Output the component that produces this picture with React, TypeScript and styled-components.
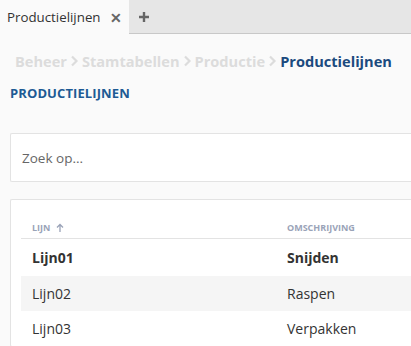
import React, { FC } from 'react'
import styled, { createGlobalStyle } from 'styled-components'

const GlobalStyle = createGlobalStyle`
	html, body {
		margin: 0;
		padding: 0;
		background: #fafafa;
		font-family: 'Open Sans', 'Liberation Sans', sans-serif;
		overflow: hidden;
	}
`

const TabBar = styled.div`
	display: flex;
	height: 34px;
	background: #e6e6e6;
	border-bottom: solid 1px #c8c8c8;
	box-sizing: border-box;
`

const Tab = styled.div`
	display: flex;
	align-items: center;
	gap: 9px;
	width: 129px;
	padding-left: 7px;
	box-sizing: border-box;
	background: #fafafa;
	height: 34px;
	font-size: 13.3px;
	color: #333;

	i {
		font-style: normal;
		font-weight: 700;
		font-size: 14px;
		color: #666;
	}
`

const AddTab = styled.div`
	display: flex;
	align-items: center;
	justify-content: center;
	width: 30px;
	color: #666;
`

const Page = styled.div`
	padding: 17px 0 0 10px;
`

const Breadcrumb = styled.ul`
	list-style: none;
	display: flex;
	align-items: center;
	margin: 0 0 0 5px;
	padding: 0;
	font-size: 14.6px;
	font-weight: 700;

	li {
		display: flex;
		align-items: center;
		color: #dcdcdc;
	}

	li.active {
		color: #1b4a7e;
	}

	svg {
		margin: 0 3px;
	}
`

const Title = styled.h1`
	margin: 13px 0 0;
	font-size: 13px;
	font-weight: 700;
	color: #1d5a94;
	letter-spacing: 0.1px;
`

const Card = styled.div<{ $top: number }>`
	margin-top: ${p => p.$top}px;
	background: #fff;
	border: solid 1px #e3e3e3;
	border-right: none;
	border-radius: 2px 0 0 2px;
`

const Search = styled.input`
	display: block;
	width: 100%;
	height: 47px;
	border: none;
	outline: none;
	padding: 0 11px;
	box-sizing: border-box;
	font-family: inherit;
	font-size: 13.5px;
	color: #333;
	background: transparent;

	&::placeholder {
		color: #666;
	}
`

const Table = styled.div`
	padding: 17px 0 0 10px;
`

const Row = styled.div<{ $head?: boolean; $striped?: boolean; $bold?: boolean }>`
	display: grid;
	grid-template-columns: 255px 1fr;
	align-items: center;
	height: ${p => (p.$head ? 21 : p.$bold ? 37 : 35)}px;
	padding: 0 11px;
	background: ${p => (p.$striped ? '#f5f5f5' : 'transparent')};
	border-bottom: ${p => (p.$head ? 'solid 1px #e3e3e3' : 'none')};
	font-size: ${p => (p.$head ? '9px' : '14px')};
	font-weight: ${p => (p.$head || p.$bold ? 700 : 400)};
	color: ${p => (p.$head ? '#9aa3b8' : '#333')};
	text-transform: ${p => (p.$head ? 'uppercase' : 'none')};

	span {
		display: flex;
		align-items: center;
		gap: 6px;
	}
`

const Chevron: FC = () => (
	<svg width='9' height='12' viewBox='0 0 9 12'>
		<path d='M2 1.5 L6.5 6 L2 10.5' fill='none' stroke='#dcdcdc' strokeWidth='2.2' />
	</svg>
)

const rows = [
	{ lijn: 'Lijn01', omschrijving: 'Snijden' },
	{ lijn: 'Lijn02', omschrijving: 'Raspen' },
	{ lijn: 'Lijn03', omschrijving: 'Verpakken' },
]

const crumbs = ['Beheer', 'Stamtabellen', 'Productie']

const App: FC = () => {
	return (
		<>
			<GlobalStyle />
			<TabBar>
				<Tab>
					Productielijnen
					<i>✕</i>
				</Tab>
				<AddTab>
					<svg width='12' height='12' viewBox='0 0 12 12'>
						<path d='M6 1 V11 M1 6 H11' stroke='#666' strokeWidth='2.4' />
					</svg>
				</AddTab>
			</TabBar>
			<Page>
				<Breadcrumb>
					{crumbs.map(c => (
						<li key={c}>
							{c}
							<Chevron />
						</li>
					))}
					<li className='active'>Productielijnen</li>
				</Breadcrumb>
				<Title>PRODUCTIELIJNEN</Title>
				<Card $top={31}>
					<Search placeholder='Zoek op...' />
				</Card>
				<Card $top={17}>
					<Table>
						<Row $head>
							<span>
								Lijn
								<svg width='8' height='9' viewBox='0 0 8 9'>
									<path d='M4 9 V1.5 M1 4.5 L4 1.5 L7 4.5' fill='none' stroke='#9aa3b8' strokeWidth='1.3' />
								</svg>
							</span>
							<span>Omschrijving</span>
						</Row>
						{rows.map((r, i) => (
							<Row key={r.lijn} $striped={i === 1} $bold={i === 0}>
								<span>{r.lijn}</span>
								<span>{r.omschrijving}</span>
							</Row>
						))}
					</Table>
				</Card>
			</Page>
		</>
	)
}

export default App
